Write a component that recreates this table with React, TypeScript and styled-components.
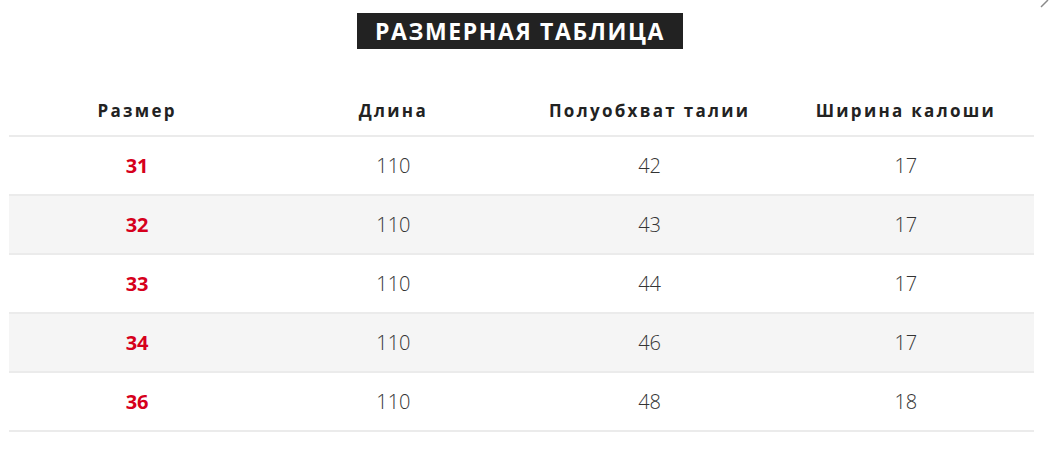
import styled, { createGlobalStyle } from 'styled-components';

const GlobalStyle = createGlobalStyle`
  html, body {
    margin: 0;
    padding: 0;
    background: #ffffff;
    font-family: "Open Sans", "Noto Sans", sans-serif;
  }
`;

const Page = styled.div`
  position: relative;
  width: 1050px;
  height: 458px;
  padding: 13px 16px 0 9px;
  box-sizing: border-box;
  overflow: hidden;
`;

const Corner = styled.svg`
  position: absolute;
  top: 0;
  right: 0;
`;

const TitleWrap = styled.div`
  display: flex;
  justify-content: center;
  padding-right: 3px;
`;

const Title = styled.h2`
  margin: 0;
  width: 326px;
  height: 36px;
  display: flex;
  align-items: center;
  justify-content: center;
  background: #222222;
  color: #ffffff;
  font-size: 23px;
  font-weight: 700;
  letter-spacing: 1.6px;
  text-transform: uppercase;
`;

const Table = styled.table`
  width: 1025px;
  margin-top: 37px;
  border-collapse: collapse;
  table-layout: fixed;
`;

const HeadCell = styled.th`
  height: 49px;
  padding: 0;
  text-align: center;
  font-size: 17px;
  font-weight: 700;
  letter-spacing: 2.3px;
  color: #222222;
  border-bottom: 2px solid #ebebeb;
`;

const Row = styled.tr<{ $striped: boolean }>`
  background: ${({ $striped }) => ($striped ? '#f5f5f5' : '#ffffff')};
`;

const Cell = styled.td<{ $accent?: boolean }>`
  height: 57px;
  padding: 0;
  text-align: center;
  font-size: 20px;
  font-weight: ${({ $accent }) => ($accent ? 700 : 300)};
  color: ${({ $accent }) => ($accent ? '#d6001c' : '#333333')};
  border-bottom: 2px solid #ebebeb;
`;

const headers = ['Размер', 'Длина', 'Полуобхват талии', 'Ширина калоши'];

const rows = [
  ['31', '110', '42', '17'],
  ['32', '110', '43', '17'],
  ['33', '110', '44', '17'],
  ['34', '110', '46', '17'],
  ['36', '110', '48', '18'],
];

export default function App() {
  return (
    <>
      <GlobalStyle />
      <Page>
        <Corner width="12" height="8" viewBox="0 0 12 8">
          <line x1="3" y1="7" x2="10" y2="0" stroke="#8a8a8a" strokeWidth="1.5" />
        </Corner>
        <TitleWrap>
          <Title>Размерная таблица</Title>
        </TitleWrap>
        <Table>
          <thead>
            <tr>
              {headers.map((h) => (
                <HeadCell key={h}>{h}</HeadCell>
              ))}
            </tr>
          </thead>
          <tbody>
            {rows.map((r, i) => (
              <Row key={r[0]} $striped={i % 2 === 1}>
                {r.map((v, j) => (
                  <Cell key={j} $accent={j === 0}>
                    {v}
                  </Cell>
                ))}
              </Row>
            ))}
          </tbody>
        </Table>
      </Page>
    </>
  );
}
